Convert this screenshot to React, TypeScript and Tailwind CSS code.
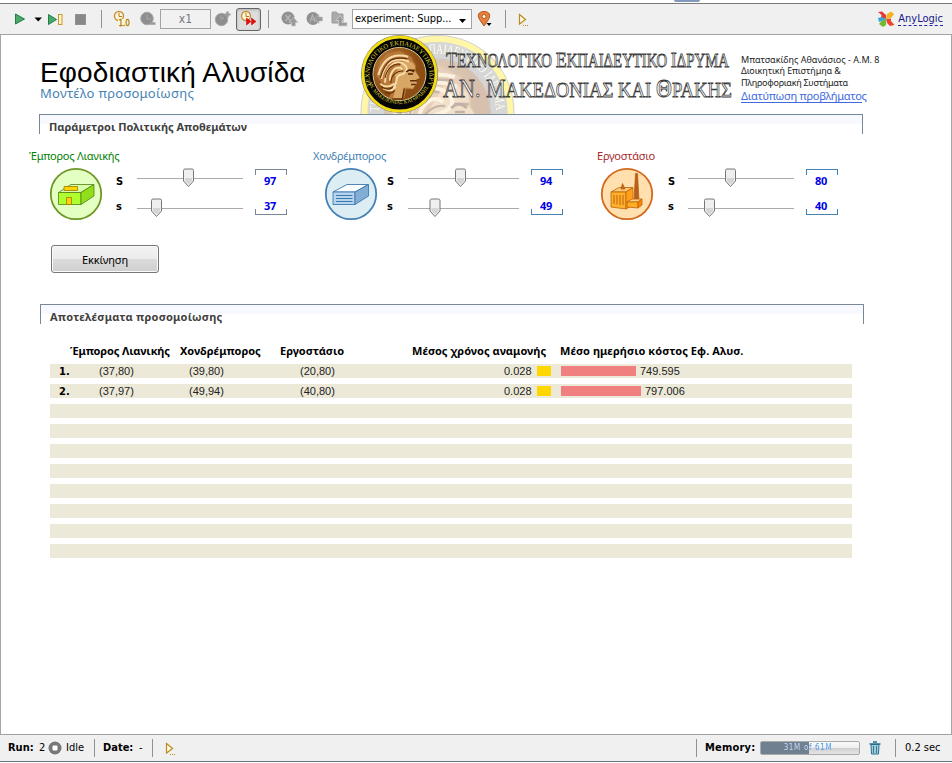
import React from "react";

const tahoma = "font-['DejaVu_Sans_Condensed','DejaVu_Sans',sans-serif] [font-stretch:condensed]";
const noto = "font-['Noto_Sans',sans-serif]";
const arial = "font-['Liberation_Sans',Arial,sans-serif]";

function Play() {
  return (
    <svg width="12" height="12" viewBox="0 0 12 12">
      <path d="M1.5 1 L10.5 6 L1.5 11Z" fill="#4aa86a" stroke="#1f7f48" />
    </svg>
  );
}

function Console() {
  return (
    <svg width="12" height="14" viewBox="0 0 12 14">
      <path d="M1.5 1.5 L7.5 6.5 L1.5 11Z" fill="#fffbe8" stroke="#bd8a1e" strokeWidth="1.2" />
      <path d="M5 12.5H11" stroke="#bd8a1e" strokeDasharray="1 1" />
    </svg>
  );
}

function Clock({ x = 6, y = 6 }: { x?: number; y?: number }) {
  return (
    <g transform={`translate(${x} ${y})`}>
      <circle r="4.5" fill="#fff6d8" stroke="#c68d35" strokeWidth="1.4" />
      <path d="M0 -3V0.5H3" fill="none" stroke="#b97822" />
    </g>
  );
}

function Separator({ className }: { className: string }) {
  return <div className={`w-px shrink-0 bg-[#929292] ${className}`} />;
}

function Toolbar() {
  return (
    <div className={`flex h-[32px] shrink-0 items-center border-y border-t-[#7b7b7b] border-b-[#a2a2a2] bg-[#f0f0f0] text-[11px] ${tahoma}`}>
      <div className="ml-[14px] w-[20px]"><Play /></div>
      <svg className="mt-px" width="8" height="5"><path d="M0.5 0.5H8L4.2 4.5Z" /></svg>
      <svg className="ml-[5px]" width="17" height="13" viewBox="0 0 17 13">
        <path d="M1.5 1.5L9.5 6.5L1.5 11.5Z" fill="#4aa86a" stroke="#1f7f48" />
        <rect x="11.5" y="1.5" width="3.5" height="10" fill="#fff3bd" stroke="#c59a35" />
      </svg>
      <div className="ml-[11px] h-[11px] w-[11px] border border-[#929292] bg-[#888]" />
      <Separator className="ml-[15px] h-[18px]" />
      <svg className="ml-[11px]" width="20" height="18" viewBox="0 0 20 18">
        <Clock x={6} y={6} />
        <rect x="5" y="9" width="13" height="8" fill="#fbf6d5" />
        <text x="5.500" y="16" fontSize="8" fill="#a87818" stroke="#a87818" strokeWidth=".3" fontFamily="DejaVu Sans Condensed">1.0</text>
      </svg>
      <svg className="ml-[7px]" width="17" height="16" viewBox="0 0 17 16">
        <circle cx="7" cy="7.500" r="6.300" fill="#8e8e8e" stroke="#aaa" />
        <path d="M7 3.500V8H11" fill="none" stroke="#aaa" />
        <path d="M9.500 12.500H15.500" stroke="#9a9a9a" strokeWidth="2.500" />
      </svg>
      <div className="ml-[3px] flex h-[20px] w-[51px] items-center justify-center border border-[#a3a3a3] bg-[#f1f1f1] text-[12px] leading-[16px] text-[#75777d]">x1</div>
      <svg className="ml-[3px]" width="18" height="18" viewBox="0 0 18 18">
        <circle cx="7.5" cy="9.500" r="6.2" fill="#8e8e8e" stroke="#aaa" />
        <path d="M7 5.500V9.500L10 7.500" fill="none" stroke="#aaa" />
        <path d="M10.500 4.500H16.500M13.500 1.500V7.500" stroke="#999" strokeWidth="2.200" />
      </svg>
      <div className="ml-[4px] flex h-[23px] w-[25px] items-center justify-center rounded-[3px] border border-[#666] bg-[#dedede] shadow-[inset_0_1px_3px_#8888]">
        <svg width="20" height="18" viewBox="0 0 20 18">
          <Clock x={7} y={6} />
          <path d="M7.500 8L12 11.500L7.500 15ZM12.500 8L17 11.500L12.500 15Z" fill="#e01010" stroke="#c00" strokeWidth=".5" />
        </svg>
      </div>
      <Separator className="ml-[7px] h-[18px]" />
      <svg className="ml-[12px]" width="18" height="16" viewBox="0 0 18 16">
        <circle cx="7" cy="7" r="6.500" fill="#919191" />
        <path d="M4.500 4L9.500 10M9.500 4L4.500 10" stroke="#b5b5b5" strokeWidth="1.600" />
        <path d="M8 11.500L12.500 6.500L17 11.500H14.500V15H10.500V11.500Z" fill="#999" stroke="#c8c8c8" strokeWidth=".7" />
      </svg>
      <svg className="ml-[7px]" width="18" height="16" viewBox="0 0 18 16">
        <circle cx="7" cy="7.500" r="6.500" fill="#919191" />
        <path d="M4 11L6.500 4L9 11M5 8.500H8.500" fill="none" stroke="#b5b5b5" strokeWidth="1.200" />
        <path d="M16.500 6H13V3.500L8.500 8L13 12.500V10H16.500Z" fill="#999" stroke="#c8c8c8" strokeWidth=".6" />
      </svg>
      <svg className="ml-[7px]" width="18" height="16" viewBox="0 0 18 16">
        <path d="M1 2Q1 1 2 1H5.500L7 3H12V12H1Z" fill="#aaa" stroke="#9b9b9b" />
        <path d="M5 9.500L9 4.500L13 9.500H11V11.500H16V15H7.500V9.500Z" fill="#9a9a9a" stroke="#d0d0d0" strokeWidth=".8" />
      </svg>
      <div className="ml-[3px] flex h-[20px] w-[120px] shrink-0 items-center justify-between border border-[#a3a3a3] bg-white pl-[2px] pr-[5px]">
        <span className="whitespace-nowrap tracking-[-0.08px]">experiment: Supp...</span>
        <svg className="mt-[3px]" width="7" height="4"><path d="M0 0H7L3.500 4Z" /></svg>
      </div>
      <svg className="ml-[5px]" width="18" height="18" viewBox="0 0 18 18">
        <path d="M7 16L2.500 9.500C-1 3 4 1.500 7 1.500S15 3 11.500 9.500Z" fill="#e6813d" stroke="#b6551c" />
        <circle cx="7" cy="6.500" r="2" fill="#fff" stroke="#b6551c" />
        <path d="M9.500 13H14.500L12 16Z" />
      </svg>
      <Separator className="ml-[10px] h-[18px]" />
      <div className="ml-[12px] mt-px"><Console /></div>
      <div className="ml-auto mr-[9px] flex items-center">
        <svg className="mr-[3px]" width="18" height="18" viewBox="0 0 18 18">
          <path d="M1 2L5 1.500L9 5V9L4 8L4.500 5Z" fill="#e53935" />
          <path d="M9 9L10 4L14 1.500L17 4L14.500 7.500Z" fill="#f6b21f" />
          <path d="M9 9L14 8.500L14 11L17.500 15L13 16L10 13Z" fill="#e9482e" />
          <path d="M9 9L9 15L6 17L2 14L5 10.500Z" fill="#7ab52f" />
          <path d="M1 8L5 7L9 9L5 11L2 12Z" fill="#39a7d5" />
        </svg>
        <span className="border-b border-dashed border-[#2029a5] leading-[13px] text-[#17178c]">AnyLogic</span>
      </div>
    </div>
  );
}

function Portrait() {
  return (
    <g>
      <circle r="27" fill="url(#bronze)" />
      <path d="M-11 25L-5 10L-15 13L-24 2L-21 -12L-13 -21L0 -24L12 -18L17 -9L17 -3L21 4L17 6L18 10L14 16L7 16L5 25Q-3 29 -11 25Z" fill="#b9783a" />
      <path d="M3 -13Q14 -15 16 -8L16 -3L21 4L17 6L18 9L14 15L6 14L3 26L-7 26L-3 11L-5 0Z" fill="#d9a765" />
      <path d="M5 15L3 26L-8 26M8 -4L16 -4M11 7L18 7M12 11H17" fill="none" stroke="#613006" strokeWidth="1.500" />
      <path d="M-22 1C-17 -17 -6 -22 9 -18M-19 5C-15 -15 -3 -18 10 -13M-15 9C-15 -7 -5 -15 3 -11C12 -6 6 0 0 1C-6 4 0 11 -9 17M-10 7C-10 -3 -3 -10 3 -5M-20 10Q-14 16 -5 10M-17 15Q-8 20 -4 13" fill="none" stroke="#f8dcaa" strokeWidth="2" />
      <path d="M-20 4C-14 -16 -6 -18 8 -16M-15 4C-13 -6 -6 -12 1 -10M-9 9C-9 1 -2 -4 4 -3M-19 13Q-13 18 -7 14M-15 19Q-8 22 -5 17" fill="none" stroke="#633006" strokeWidth="1.200" />
      <path d="M7 -2Q11 -6 15 -2M9 0H14" fill="none" stroke="#482105" strokeWidth="1.400" />
    </g>
  );
}

function Banner() {
  return (
    <svg className="block shrink-0" width="380" height="79" viewBox="355 35 380 79">
      <defs>
        <radialGradient id="bronze" cx="0.35" cy="0.35"><stop stopColor="#c98b45" /><stop offset="1" stopColor="#8b4d14" /></radialGradient>
        <path id="crestArc" d="M371.500 86A30 30 0 1 1 427.500 86" />
        <path id="crestBottom" d="M368 82A33.500 33.500 0 0 0 431 82" />
        <path id="fadedArc" d="M379 112A58.500 58.500 0 0 1 496 112" />
      </defs>
      <g opacity=".34">
        <circle cx="437.500" cy="112" r="77" fill="#777" />
        <circle cx="437.500" cy="112" r="73" fill="#888" stroke="#ffe500" strokeWidth="6" />
        <circle cx="437.500" cy="112" r="53" fill="#fff" stroke="#555" />
        <g transform="translate(437.500 112) scale(1.950)"><Portrait /></g>
        <text fontSize="14" fill="#fffbd0" fontFamily="Liberation Serif"><textPath href="#fadedArc" textLength="182" lengthAdjust="spacingAndGlyphs">ΤΕΧΝΟΛΟΓΙΚΟ ΕΚΠΑΙΔΕΥΤΙΚΟ ΙΔΡΥΜΑ</textPath></text>
      </g>
      <ellipse cx="399.500" cy="74" rx="38.500" ry="39" fill="#777" />
      <ellipse cx="399.500" cy="74" rx="36.500" ry="37" fill="#050505" stroke="#f2dc13" strokeWidth="2.800" />
      <circle cx="399.500" cy="74" r="26.500" fill="#a86525" stroke="#dad0a0" />
      <g transform="translate(399.500 74) scale(.96)"><Portrait /></g>
      <text fontSize="6.500" fill="#ddcf2c" fontFamily="Liberation Serif"><textPath href="#crestArc" textLength="126" lengthAdjust="spacingAndGlyphs">ΤΕΧΝΟΛΟΓΙΚΟ ΕΚΠΑΙΔΕΥΤΙΚΟ ΙΔΡΥΜΑ</textPath></text>
      <text fontSize="5.500" fill="#ddcf2c" fontFamily="Liberation Serif"><textPath href="#crestBottom" textLength="76" lengthAdjust="spacingAndGlyphs">ΑΝ. ΜΑΚΕΔΟΝΙΑΣ ΚΑΙ ΘΡΑΚΗΣ</textPath></text>
      <g fill="#fff" stroke="#3c3c3c" strokeWidth=".8" fontFamily="Liberation Serif">
        <text x="446" y="66.500" fontSize="18" textLength="283" lengthAdjust="spacingAndGlyphs"><tspan fontSize="22">Τ</tspan>ΕΧΝΟΛΟΓΙΚΟ <tspan fontSize="22">Ε</tspan>ΚΠΑΙΔΕΥΤΙΚΟ <tspan fontSize="22">Ι</tspan>ΔΡΥΜΑ</text>
        <text x="443" y="96.500" fontSize="22" textLength="289" lengthAdjust="spacingAndGlyphs"><tspan fontSize="26">ΑΝ. Μ</tspan>ΑΚΕΔΟΝΙΑΣ ΚΑΙ <tspan fontSize="26">Θ</tspan>ΡΑΚΗΣ</text>
      </g>
    </svg>
  );
}

function Header() {
  return (
    <header className="flex h-[79px] shrink-0">
      <div className="w-[354px] shrink-0 whitespace-nowrap pl-[39px] pt-[22px]">
        <h1 className={`text-[28px] leading-[32px] tracking-[0.12px] text-black ${arial}`}>Εφοδιαστική Αλυσίδα</h1>
        <p className={`-mt-[4px] text-[13px] leading-[16px] tracking-[0.28px] text-[#4682b4] ${noto}`}>Μοντέλο προσομοίωσης</p>
      </div>
      <Banner />
      <div className={`whitespace-nowrap pl-[6px] pt-[19px] text-[9px] leading-[11.500px] text-[#222] ${noto}`}>
        <p>Μπατσακίδης Αθανάσιος - Α.Μ. 8</p>
        <p className="-mt-px tracking-[-0.1px]">Διοικητική Επιστήμηα &amp;</p>
        <p className="mt-px tracking-[-0.27px]">Πληροφοριακή Συστήματα</p>
        <p className="mt-px w-[121px] border-b border-[#4169e1] text-[11px] leading-[12px] tracking-[-0.27px] text-[#4169e1]">Διατύπωση προβλήματος</p>
      </div>
    </header>
  );
}

function SectionTitle({ children, className }: { children: string; className: string }) {
  return (
    <div className={`h-[20px] w-[824px] shrink-0 border border-b-0 border-[#778899] bg-[linear-gradient(#f8f8ff_9px,#ffffff_9px)] pl-[9px] pt-[4px] ${className}`}>
      <h2 className={`text-[11px] font-bold leading-[16px] text-[#404040] ${noto}`}>{children}</h2>
    </div>
  );
}

function Slider({ value, width }: { value: number; width: number }) {
  return (
    <svg className="block" width={width} height="20" viewBox={`0 0 ${width} 20`}>
      <path d={`M0 10.500H${width}`} stroke="#aaa" />
      <path d={`M${value - 5} 2.500Q${value - 5} 1 ${value - 3.500} 1H${value + 3.500}Q${value + 5} 1 ${value + 5} 2.500V13L${value} 18.500L${value - 5} 13Z`} fill="#efefef" stroke="#777" />
      <path d={`M${value - 3.500} 10H${value + 3.500}V13L${value} 16.500L${value - 3.500} 13Z`} fill="#d5d5d5" />
    </svg>
  );
}

function Shop() {
  return (
    <svg width="54" height="54" viewBox="0 0 54 54">
      <circle cx="27" cy="27" r="25.200" fill="#e4ffc2" stroke="#6f9728" strokeWidth="1.800" />
      <g stroke="#557d18" strokeWidth=".8">
        <path d="M9.500 25.500L22 17.500H45L32 25.500Z" fill="#d7ffa9" />
        <path d="M9.500 25.500H32V37.500H9.500Z" fill="#adff2f" />
        <path d="M32 25.500L45 17.500V29L32 37.500Z" fill="#8fe01a" />
        <path d="M15 19.500H28.500V23.500H15ZM17.500 30.500H22.500V37.500H17.500Z" fill="#ffd400" stroke="#a27700" />
      </g>
    </svg>
  );
}

function Warehouse() {
  return (
    <svg width="54" height="54" viewBox="0 0 54 54">
      <circle cx="27" cy="27" r="25.200" fill="#dceef4" stroke="#4682b4" strokeWidth="1.800" />
      <g stroke="#3e79ae" strokeWidth=".9">
        <path d="M9 25L23 17.500H44.500L31 25Z" fill="#fafdff" />
        <path d="M9 25H31V37.500H9Z" fill="#b7d4ee" />
        <path d="M31 25L44.500 17.500V29L31 37.500Z" fill="#82add5" />
        <path d="M12 28.500H28.500M12 31.500H28.500M12 34.500H28.500" strokeWidth="1.100" />
      </g>
    </svg>
  );
}

function Factory() {
  return (
    <svg width="54" height="54" viewBox="0 0 54 54">
      <circle cx="27" cy="27" r="25.200" fill="#ffe0ae" stroke="#d2691e" strokeWidth="1.800" />
      <g stroke="#bd620a" strokeWidth=".8">
        <path d="M11 25L19 20.500H33L26 25Z" fill="#ffc976" />
        <path d="M11 25H26V42L11 40Z" fill="#ffb02c" />
        <path d="M26 25L33 20.500V38L26 42Z" fill="#ff9f1b" />
        <path d="M21 22L22.500 16.500L25 22Z" fill="#b86620" />
        <path d="M34 34L35.500 6.500H37.500L39 34Z" fill="#b75d22" />
        <path d="M27 35L32 32H42L38 35Z" fill="#ffcf83" />
        <path d="M27 35H38V41L27 40Z" fill="#ffad24" />
        <path d="M38 35L42 32V38L38 41Z" fill="#f88600" />
        <path d="M14 28V37M17 28V37.500M20 28V38M23 28V38" strokeWidth="1" />
      </g>
    </svg>
  );
}

interface StageProps {
  name: string; color: string; inset: string; icon: React.ReactNode; letterGap: string;
  sliderGap: string; width: number; upper: number; lower: number; upperPos: number; lowerPos: number; frame: string;
}

function Stage(p: StageProps) {
  return (
    <section className="h-[88px] w-[284px] shrink-0">
      <h3 className={`h-[21px] text-[11px] leading-[16px] tracking-[-0.23px] ${p.color} ${noto}`}>{p.name}</h3>
      <div className={`flex ${p.inset}`}>
        <div className="-mt-[2px]">{p.icon}</div>
        <div className={`flex flex-col text-[11px] font-bold leading-[26px] ${p.letterGap} ${tahoma}`}>
          <span className="h-[25px]">S</span><span className="h-[25px]">s</span>
        </div>
        <div className={`-mt-px flex flex-col gap-[10px] ${p.sliderGap}`}>
          <Slider value={p.upperPos} width={p.width} />
          <Slider value={p.lowerPos} width={p.width} />
        </div>
        <div className={`ml-[12px] flex h-[46px] w-[32px] flex-col items-center border-y bg-[linear-gradient(currentColor,currentColor),linear-gradient(currentColor,currentColor),linear-gradient(currentColor,currentColor),linear-gradient(currentColor,currentColor)] bg-[length:1px_5px] bg-[position:0_0,100%_0,0_100%,100%_100%] bg-no-repeat pr-[2px] ${p.frame}`}>
          <span className={`h-[25px] shrink-0 text-[11px] font-bold leading-[22px] tracking-[-0.2px] text-[#0000e6] ${noto}`}>{p.upper}</span>
          <span className={`h-[19px] shrink-0 text-[11px] font-bold leading-[22px] tracking-[-0.2px] text-[#0000e6] ${noto}`}>{p.lower}</span>
        </div>
      </div>
    </section>
  );
}

const runs = [
  ["1.", "(37,80)", "(39,80)", "(20,80)", "0.028", "749.595", "w-[75px]"],
  ["2.", "(37,97)", "(49,94)", "(40,80)", "0.028", "797.006", "w-[80px]"],
];

function Results() {
  return (
    <div className="ml-[49px] mt-[19px] w-[802px]">
      <div className={`flex h-[21px] whitespace-nowrap text-[11px] font-bold leading-[16px] ${noto}`}>
        <span className="ml-[20px] w-[110px] tracking-[-0.13px]">Έμπορος Λιανικής</span>
        <span className="w-[100px]">Χονδρέμπορος</span>
        <span className="w-[132px]">Εργοστάσιο</span>
        <span className="w-[148px] tracking-[0.04px]">Μέσος χρόνος αναμονής</span>
        <span className="tracking-[0.07px]">Μέσο ημερήσιο κόστος Εφ. Αλυσ.</span>
      </div>
      <div className={`flex flex-col gap-[6px] text-[11px] text-[#222] ${arial}`}>
        {Array.from({ length: 10 }, (_, i) => {
          const r = runs[i];
          return (
            <div key={i} className="flex h-[14px] items-center bg-[#ece9d8] leading-[14px]">
              {r && <>
                <b className={`ml-[9px] mt-px w-[40px] text-black ${tahoma}`}>{r[0]}</b>
                <span className="w-[90px]">{r[1]}</span>
                <span className="w-[111px]">{r[2]}</span>
                <span className="w-[204px]">{r[3]}</span>
                <span className="w-[33px]">{r[4]}</span>
                <span className="mb-px h-[10px] w-[14px] bg-[#ffd700]" />
                <span className={`mb-px ml-[10px] mr-[4px] h-[10px] bg-[#f08080] ${r[6]}`} />
                <span>{r[5]}</span>
              </>}
            </div>
          );
        })}
      </div>
    </div>
  );
}

function StatusBar() {
  return (
    <footer className={`flex h-[28px] shrink-0 items-center border-y border-t-[#a2a2a2] border-b-[#687784] bg-[#f0f0f0] text-[11px] ${tahoma}`}>
      <b className="ml-[8px] w-[31px]">Run:</b><span className="w-[9px]">2</span>
      <svg width="14" height="14"><circle cx="7" cy="7" r="6.500" fill="#777" /><rect x="4.500" y="4.500" width="5" height="5" rx="1" fill="#fff" /></svg>
      <span className="ml-[4px] w-[28px]">Idle</span>
      <Separator className="h-[18px]" />
      <b className="ml-[8px] w-[36px]">Date:</b><span className="w-[13px]">-</span>
      <Separator className="h-[18px]" />
      <div className="ml-[12px] mt-px"><Console /></div>
      <Separator className="ml-auto h-[18px]" />
      <b className="ml-[8px] w-[55px] tracking-[0.2px]">Memory:</b>
      <div className="flex h-[14px] w-[100px] items-center justify-center rounded-[2px] border border-[#aaa] bg-[linear-gradient(90deg,#708090_49%,transparent_49%),linear-gradient(#fafafa,#eeeeee_50%,#d0d0d0_50%,#e5e5e5)] text-[8px] tracking-[0.65px]">
        <span className="mr-[4px] whitespace-pre bg-[linear-gradient(90deg,#c8e1ff_52%,#4498ef_52%)] bg-clip-text font-['DejaVu_Sans',sans-serif] text-transparent">31M of 61M</span>
      </div>
      <svg className="ml-[9px]" width="12" height="14" viewBox="0 0 12 14">
        <path d="M2 3.500H10L9.500 13H2.500Z" fill="#9dcddd" stroke="#26708c" />
        <path d="M0.500 3H11.500M4 1H8" stroke="#26708c" strokeWidth="1.500" />
        <path d="M4.500 5V12M7.500 5V12" stroke="#397e8e" />
      </svg>
      <Separator className="ml-[14px] h-[18px]" />
      <span className="ml-[9px] w-[47px] whitespace-nowrap">0.2 sec</span>
    </footer>
  );
}

export default function App() {
  return (
    <div className="flex h-[763px] w-[952px] flex-col overflow-hidden bg-white text-black">
      <div className="flex h-[3px] shrink-0 items-start"><div className="ml-[674px] h-[2px] w-[26px] rounded-b-full bg-[#8399ba]" /></div>
      <Toolbar />
      <main className="flex h-[699px] shrink-0 flex-col overflow-hidden border-x border-[#a6a6a6]">
        <Header />
        <SectionTitle className="ml-[38px]">Παράμετροι Πολιτικής Αποθεμάτων</SectionTitle>
        <div className="ml-[28px] mt-[14px] flex h-[97px] shrink-0">
          <Stage name="Έμπορος Λιανικής" color="text-[#008000]" inset="pl-[20px]" icon={<Shop />} letterGap="ml-[13px] w-[8px]" sliderGap="ml-[13px]" width={106} upper={97} lower={37} upperPos={51.5} lowerPos={19.5} frame="border-[#778899] text-[#778899]" />
          <Stage name="Χονδρέμπορος" color="text-[#4682b4]" inset="pl-[11px]" icon={<Warehouse />} letterGap="ml-[9px] w-[8px]" sliderGap="ml-[13px]" width={111} upper={94} lower={49} upperPos={52.5} lowerPos={27} frame="border-[#4682b4] text-[#4682b4]" />
          <Stage name="Εργοστάσιο" color="text-[#a52a2a]" inset="pl-[3px]" icon={<Factory />} letterGap="ml-[14px] w-[8px]" sliderGap="ml-[12px]" width={106} upper={80} lower={40} upperPos={42.5} lowerPos={21.5} frame="border-[#4682b4] text-[#4682b4]" />
        </div>
        <button className={`ml-[50px] block h-[28px] w-[108px] shrink-0 rounded-[3px] border border-[#777] bg-[linear-gradient(#f3f3f3,#ebebeb_50%,#dcdcdc_50%,#cfcfcf)] pt-[2px] text-[11px] tracking-[-0.15px] shadow-[inset_0_0_0_1px_#fafafa] ${noto}`}>Εκκίνηση</button>
        <SectionTitle className="ml-[39px] mt-[31px] tracking-[0.24px]">Αποτελέσματα προσομοίωσης</SectionTitle>
        <Results />
      </main>
      <StatusBar />
    </div>
  );
}
